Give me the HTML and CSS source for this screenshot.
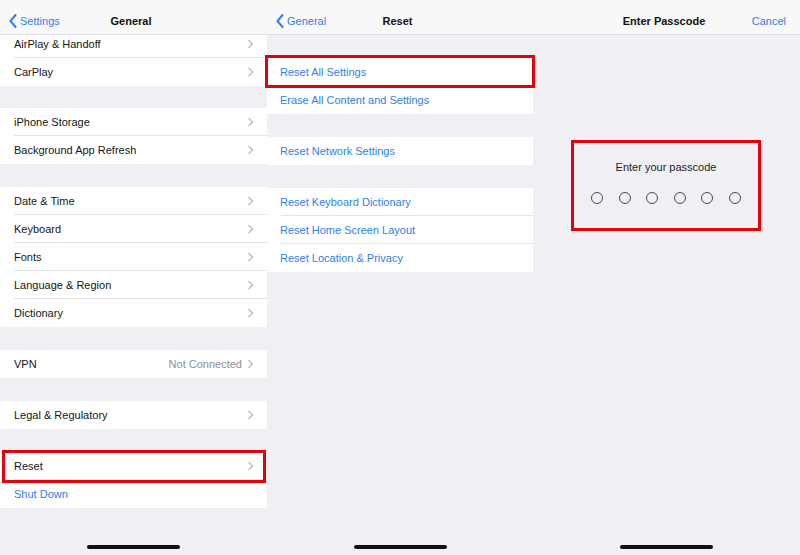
FILE: index.html
```html
<!DOCTYPE html>
<html lang="en">
<head>
<meta charset="utf-8">
<title>Settings – Reset</title>
<link rel="stylesheet" href="styles.css">
</head>
<body>
<div class="screens">

  <!-- General settings -->
  <section class="panel">
    <header class="nav">
      <a class="back" href="#">
        <svg class="back-icon" viewBox="0 0 8 14" width="8" height="14"><polyline points="6.5,1 1.5,7 6.5,13"/></svg>
        Settings
      </a>
      <h1 class="title">General</h1>
      <span></span>
    </header>
    <div class="content">
      <ul class="group first">
        <li class="row">AirPlay &amp; Handoff<span class="chev"></span></li>
        <li class="row">CarPlay<span class="chev"></span></li>
      </ul>
      <ul class="group after-first">
        <li class="row">iPhone Storage<span class="chev"></span></li>
        <li class="row">Background App Refresh<span class="chev"></span></li>
      </ul>
      <ul class="group">
        <li class="row">Date &amp; Time<span class="chev"></span></li>
        <li class="row">Keyboard<span class="chev"></span></li>
        <li class="row">Fonts<span class="chev"></span></li>
        <li class="row">Language &amp; Region<span class="chev"></span></li>
        <li class="row">Dictionary<span class="chev"></span></li>
      </ul>
      <ul class="group">
        <li class="row">VPN<span class="detail">Not Connected</span><span class="chev"></span></li>
      </ul>
      <ul class="group">
        <li class="row">Legal &amp; Regulatory<span class="chev"></span></li>
      </ul>
      <ul class="group">
        <li class="row highlight hl-general">Reset<span class="chev"></span></li>
        <li class="row link">Shut Down</li>
      </ul>
    </div>
    <div class="home-bar"></div>
  </section>

  <!-- Reset options -->
  <section class="panel">
    <header class="nav">
      <a class="back" href="#">
        <svg class="back-icon" viewBox="0 0 8 14" width="8" height="14"><polyline points="6.5,1 1.5,7 6.5,13"/></svg>
        General
      </a>
      <h1 class="title">Reset</h1>
      <span></span>
    </header>
    <div class="content">
      <ul class="group top">
        <li class="row link highlight hl-reset">Reset All Settings</li>
        <li class="row link">Erase All Content and Settings</li>
      </ul>
      <ul class="group">
        <li class="row link">Reset Network Settings</li>
      </ul>
      <ul class="group">
        <li class="row link">Reset Keyboard Dictionary</li>
        <li class="row link">Reset Home Screen Layout</li>
        <li class="row link">Reset Location &amp; Privacy</li>
      </ul>
    </div>
    <div class="home-bar"></div>
  </section>

  <!-- Passcode prompt -->
  <section class="panel">
    <header class="nav">
      <span></span>
      <h1 class="title">Enter Passcode</h1>
      <a class="action" href="#">Cancel</a>
    </header>
    <div class="content">
      <div class="passcode">
        <p class="passcode-label">Enter your passcode</p>
        <div class="dots">
          <span class="dot"></span><span class="dot"></span><span class="dot"></span>
          <span class="dot"></span><span class="dot"></span><span class="dot"></span>
        </div>
      </div>
    </div>
    <div class="home-bar"></div>
  </section>

</div>
</body>
</html>
```

FILE: styles.css
```css
* {
  box-sizing: border-box;
}

html, body {
  margin: 0;
  padding: 0;
  height: 555px;
  overflow: hidden;
  background: #f0f0f4;
  font-family: "Liberation Sans", Arial, sans-serif;
  font-size: 11px;
  color: #151515;
}

.screens {
  display: grid;
  grid-template-columns: 267px 266px 267px;
  height: 555px;
}

.panel {
  display: flex;
  flex-direction: column;
  height: 555px;
  min-width: 0;
}

/* Navigation bar */
.nav {
  position: relative;
  z-index: 2;
  height: 35px;
  padding: 8px 14px 0 9px;
  display: grid;
  grid-template-columns: 1fr auto 1fr;
  align-items: center;
  background: #f8f8f9;
  border-bottom: 1px solid #dedee2;
}

.title {
  margin: 0;
  font-size: 11px;
  font-weight: bold;
  color: #111;
  text-align: center;
}

.back,
.action {
  color: #2f80ec;
  text-decoration: none;
  font-size: 11px;
  display: flex;
  align-items: center;
  gap: 3px;
}

.action {
  justify-self: end;
}

.back-icon polyline {
  fill: none;
  stroke: #2f80ec;
  stroke-width: 2;
  stroke-linecap: round;
  stroke-linejoin: round;
}

/* Grouped table */
.content {
  flex: 1;
}

.group {
  list-style: none;
  margin: 23px 0 0;
  padding: 0;
  background: #fff;
}

.group.first {
  margin-top: -5px;
}

.group.after-first {
  margin-top: 22px;
}

.group.top {
  margin-top: 23px;
}

.row {
  position: relative;
  height: 28px;
  display: flex;
  align-items: center;
  padding: 0 14px;
  background: linear-gradient(#e4e4e8, #e4e4e8) no-repeat 14px 100% / calc(100% - 14px) 1px;
}

.row:last-child {
  background: none;
}

.row.link {
  color: #2f80ec;
}

.panel + .panel .row {
  padding-left: 13px;
}

.detail {
  margin-left: auto;
  color: #8e8e93;
}

.chev {
  margin-left: auto;
  width: 5px;
  height: 8px;
  background:
    linear-gradient(to top right, transparent calc(50% - 0.7px), #c2c2c6 calc(50% - 0.7px), #c2c2c6 calc(50% + 0.7px), transparent calc(50% + 0.7px)) top / 100% 50% no-repeat,
    linear-gradient(to bottom right, transparent calc(50% - 0.7px), #c2c2c6 calc(50% - 0.7px), #c2c2c6 calc(50% + 0.7px), transparent calc(50% + 0.7px)) bottom / 100% 50% no-repeat;
}

.detail + .chev {
  margin-left: 6px;
}

/* Red callout frames */
.highlight::after {
  content: "";
  position: absolute;
  z-index: 1;
  border: 3px solid #e3000b;
  pointer-events: none;
}

.hl-general::after {
  top: -2px;
  bottom: -3px;
  left: 2px;
  right: 1px;
}

.hl-reset::after {
  top: -3px;
  bottom: -2px;
  left: -2px;
  right: -2px;
}

/* Passcode prompt */
.passcode {
  width: 190px;
  height: 91px;
  margin: 105px 0 0 38px;
  padding-top: 17px;
  border: 3px solid #e3000b;
  text-align: center;
}

.passcode-label {
  margin: 0;
  line-height: 14px;
  color: #1d1d1f;
}

.dots {
  margin-top: 18px;
  display: flex;
  justify-content: center;
  gap: 15.6px;
}

.dot {
  width: 12px;
  height: 12px;
  border: 1px solid #4a4a4e;
  border-radius: 50%;
}

/* Home indicator */
.home-bar {
  width: 93px;
  height: 4px;
  margin: 0 auto 6px;
  border-radius: 2px;
  background: #111;
}
```
